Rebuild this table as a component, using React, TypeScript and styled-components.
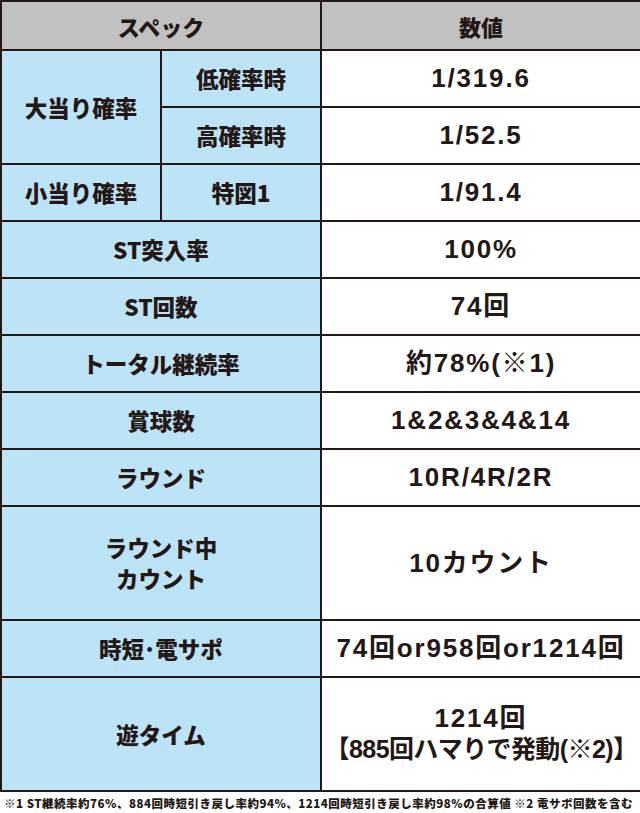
import React from 'react';
import styled, { createGlobalStyle } from 'styled-components';

const GlobalStyle = createGlobalStyle`
  html, body {
    margin: 0;
    padding: 0;
    background: #fff;
  }
  body {
    font-family: "Noto Sans CJK JP", "Liberation Sans", sans-serif;
    color: #231815;
  }
`;

interface SpecRow {
  label: string;
  value: React.ReactNode;
  tall?: boolean;
}

const App: React.FC = () => {
  const rows: SpecRow[] = [
    { label: 'ST突入率', value: '100%' },
    { label: 'ST回数', value: '74回' },
    { label: 'トータル継続率', value: '約78%(※1)' },
    { label: '賞球数', value: '1&2&3&4&14' },
    { label: 'ラウンド', value: '10R/4R/2R' },
    { label: 'ラウンド中\nカウント', value: '10カウント', tall: true },
    { label: '時短･電サポ', value: '74回or958回or1214回' },
    {
      label: '遊タイム',
      value: (
        <>
          1214回
          <br />
          <Tight>【885回ハマりで発動(※2)】</Tight>
        </>
      ),
      tall: true,
    },
  ];

  return (
    <Page>
      <GlobalStyle />
      <Table>
        <colgroup>
          <col style={{ width: 160 }} />
          <col style={{ width: 160 }} />
          <col style={{ width: 320 }} />
        </colgroup>
        <tbody>
          <HeadRow>
            <HeadCell colSpan={2}>スペック</HeadCell>
            <HeadCell>数値</HeadCell>
          </HeadRow>
          <Row>
            <Label rowSpan={2}>大当り確率</Label>
            <Label>低確率時</Label>
            <Value>1/319.6</Value>
          </Row>
          <Row>
            <Label>高確率時</Label>
            <Value>1/52.5</Value>
          </Row>
          <Row>
            <Label>小当り確率</Label>
            <Label>特図1</Label>
            <Value>1/91.4</Value>
          </Row>
          {rows.map((r) => (
            <Row key={r.label} $tall={r.tall}>
              <Label colSpan={2}>{r.label}</Label>
              <Value>{r.value}</Value>
            </Row>
          ))}
        </tbody>
      </Table>
      <Note>
        ※1 ST継続率約76%、884回時短引き戻し率約94%、1214回時短引き戻し率約98%の合算値 ※2 電サポ回数を含む
      </Note>
    </Page>
  );
};

export default App;

const Page = styled.div`
  width: 640px;
`;

const Table = styled.table`
  width: 640px;
  border-collapse: collapse;
  table-layout: fixed;
  border: 2px solid #231815;
`;

const HeadRow = styled.tr`
  height: 49px;
`;

const Row = styled.tr<{ $tall?: boolean }>`
  height: ${(p) => (p.$tall ? '114px' : '57px')};
`;

const HeadCell = styled.th`
  background: #c1c1c1;
  border: 2px solid #231815;
  font-size: 22px;
  font-weight: 900;
  text-align: center;
  padding: 0;
`;

const Label = styled.td`
  background: #bde3f7;
  border: 2px solid #231815;
  font-size: 22.5px;
  font-weight: 900;
  text-align: center;
  line-height: 31px;
  white-space: pre-line;
  padding: 0;
`;

const Value = styled.td`
  background: #fff;
  border: 2px solid #231815;
  font-family: "Liberation Sans", "Noto Sans CJK JP", sans-serif;
  font-size: 26px;
  font-weight: 700;
  letter-spacing: 1.8px;
  text-align: center;
  line-height: 31px;
  white-space: nowrap;
  padding: 0;
`;

const Tight = styled.span`
  font-size: 25px;
  letter-spacing: -0.6px;
`;

const Note = styled.div`
  font-size: 11.5px;
  font-weight: 900;
  line-height: 22px;
  white-space: nowrap;
  padding-left: 4px;
  letter-spacing: 0.5px;
`;
